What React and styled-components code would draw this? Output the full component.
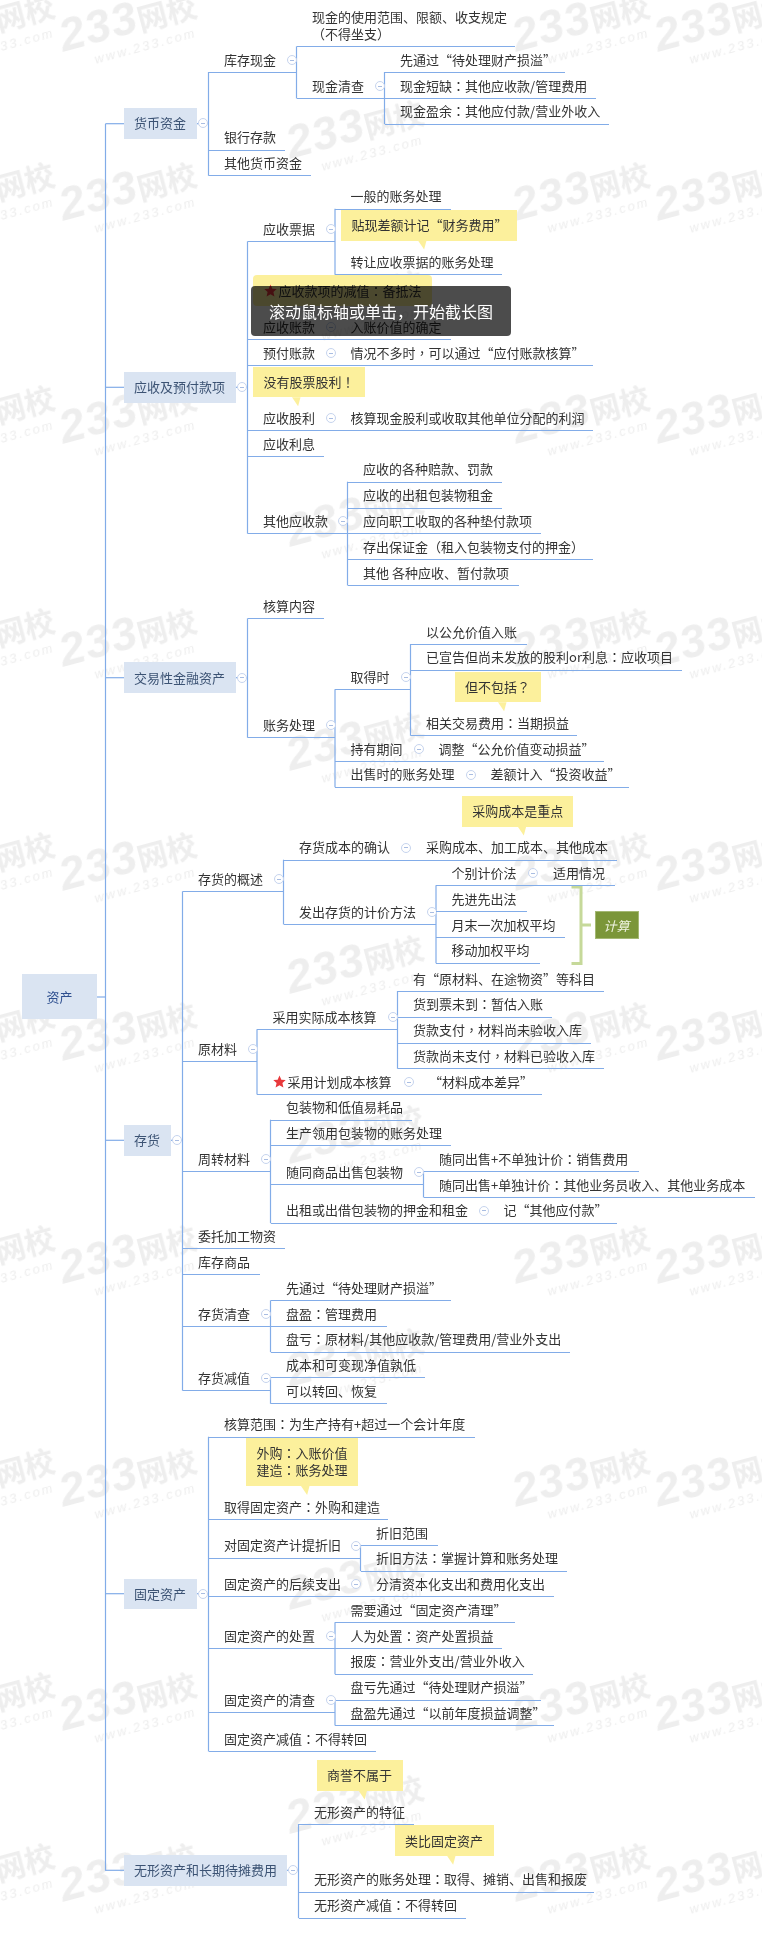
import React from 'react'
import styled, { createGlobalStyle } from 'styled-components'

const PAGE_H = 1935
const LINE = '#82ace8'

const GlobalStyle = createGlobalStyle`
  html, body { margin: 0; padding: 0; background: #fff; }
  body { font-family: "Noto Sans CJK SC", "Liberation Sans", sans-serif; color: #333; }
`

const Canvas = styled.div`
  position: relative;
  width: 762px;
  height: ${PAGE_H}px;
  overflow: hidden;
  background: #fff;
  font-size: 13px;
  filter: blur(0.35px);
`

const Mark = styled.div`
  position: absolute;
  left: ${p => p.$x - 6}px;
  top: ${p => p.$y + 28}px;
  width: 150px;
  color: #eeeeee;
  transform: rotate(-15deg);
  transform-origin: 0 0;
  white-space: nowrap;
  user-select: none;
  filter: blur(0.5px);
`
const MarkName = styled.div`
  font-family: "Liberation Sans", sans-serif;
  font-weight: 700;
  font-size: 46px;
  line-height: 42px;
  font-style: italic;
  letter-spacing: 1px;
  span { font-family: "Noto Sans CJK SC", sans-serif; font-style: normal; font-size: 30px; letter-spacing: 0; }
`
const MarkUrl = styled.div`
  font-family: "Liberation Sans", sans-serif;
  font-style: italic;
  font-size: 13px;
  line-height: 14px;
  letter-spacing: 2.2px;
  padding-left: 28px;
  margin-top: 1px;
`

const Lines = styled.svg`
  position: absolute;
  left: 0;
  top: 0;
`

const Topic = styled.div`
  position: absolute;
  left: ${p => p.$x}px;
  bottom: ${p => PAGE_H - p.$y - 1}px;
  width: ${p => p.$end - p.$x}px;
  box-sizing: border-box;
  padding: 0 0 4.5px 15.5px;
  line-height: 17px;
  white-space: pre;
  border-bottom: 1px solid ${LINE};
`

// the reference centres these marks in their box, as the TC cut does
const Punct = styled.span`
  font-family: "Noto Sans CJK TC", "Noto Sans CJK SC", sans-serif;
`

const Fold = styled.i`
  position: absolute;
  right: ${p => p.$out ? -10.5 : -0.5}px;
  bottom: ${p => p.$out ? 'calc(50% - 5px)' : '7px'};
  box-sizing: border-box;
  width: 10px;
  height: 10px;
  border: 1px solid #c6d4ee;
  border-radius: 50%;
  background: #fff;
  &::after {
    content: '';
    position: absolute;
    left: 2px;
    right: 2px;
    top: 3.5px;
    height: 1px;
    background: #a9bde2;
  }
`

const Branch = styled.div`
  position: absolute;
  left: 124px;
  top: ${p => p.$y}px;
  width: ${p => p.$w}px;
  height: 30.5px;
  box-sizing: border-box;
  padding: 0 0 1px 10px;
  display: flex;
  align-items: center;
  background: #dae4f2;
  color: #3c5374;
  white-space: nowrap;
`

const Root = styled.div`
  position: absolute;
  left: 22px;
  top: 974px;
  width: 75px;
  height: 45px;
  display: flex;
  align-items: center;
  justify-content: center;
  background: #dae4f2;
  color: #2f5090;
`

const Callout = styled.div`
  position: absolute;
  left: ${p => p.$x}px;
  top: ${p => p.$y}px;
  width: ${p => p.$w}px;
  height: ${p => p.$h || 30.5}px;
  box-sizing: border-box;
  padding: 0 0 1px 10.5px;
  display: flex;
  align-items: center;
  line-height: 17px;
  white-space: pre;
  background: #fcf09c;
  border-radius: ${p => p.$round ? 4 : 0}px;
  &::after {
    content: '';
    display: ${p => p.$tail ? 'block' : 'none'};
    position: absolute;
    left: ${p => p.$tail}px;
    top: 100%;
    width: 8.5px;
    height: 9px;
    background: #fcf09c;
    clip-path: polygon(0 0, 100% 0, 72% 100%);
  }
`

const Tag = styled.div`
  position: absolute;
  left: 594.5px;
  top: 911px;
  width: 44px;
  height: 28px;
  box-sizing: border-box;
  display: flex;
  align-items: center;
  justify-content: center;
  background: #7b9639;
  border: 1px solid #a4b873;
  color: #eef2df;
  font-style: italic;
`

const Toast = styled.div`
  position: absolute;
  left: 251px;
  top: 286px;
  width: 260px;
  height: 50px;
  display: flex;
  align-items: center;
  justify-content: center;
  border-radius: 4px;
  background: rgba(0, 0, 0, 0.7);
  color: #fff;
  font-size: 16px;
`

const StarIcon = styled.svg`
  width: 13px;
  height: 13px;
  flex: none;
  vertical-align: -1.5px;
  margin-right: 2px;
`

const Star = () => (
  <StarIcon viewBox="0 0 24 24"><path fill="#e8383b" d="M12 1l3.4 7.600 8.100.8-6.100 5.500 1.800 8.100L12 18.900 4.800 23l1.800-8.100L.5 9.400l8.100-.8z" /></StarIcon>
)

const Label = ({ text }) => text.split(/([：！？，])/).map((part, i) => (
  i % 2 ? <Punct key={i}>{part}</Punct> : part
))

// [x, line end, line y, text, has fold]
const topics = [
  // 货币资金
  [296.5, 515, 46.3, '现金的使用范围、限额、收支规定\n（不得坐支）'],
  [208.5, 296.5, 72, '库存现金', 1],
  [384.5, 565, 72, '先通过“待处理财产损溢”'],
  [296.5, 384.5, 98, '现金清查', 1],
  [384.5, 596, 98, '现金短缺：其他应收款/管理费用'],
  [384.5, 609, 123.7, '现金盈余：其他应付款/营业外收入'],
  [208.5, 285, 149.7, '银行存款'],
  [208.5, 311, 175.3, '其他货币资金'],
  // 应收及预付款项
  [335, 451, 208.7, '一般的账务处理'],
  [335, 502, 274.3, '转让应收票据的账务处理'],
  [247.5, 335, 241.3, '应收票据', 1],
  [247.5, 335, 339.3, '应收账款', 1],
  [335, 451, 339.3, '入账价值的确定'],
  [247.5, 335, 365, '预付账款', 1],
  [335, 593, 365, '情况不多时，可以通过“应付账款核算”'],
  [247.5, 335, 430.3, '应收股利', 1],
  [335, 593, 430.3, '核算现金股利或收取其他单位分配的利润'],
  [247.5, 323.5, 456.3, '应收利息'],
  [247.5, 347.5, 533.3, '其他应收款', 1],
  [347.5, 502, 481.7, '应收的各种赔款、罚款'],
  [347.5, 502, 507.7, '应收的出租包装物租金'],
  [347.5, 541, 533.3, '应向职工收取的各种垫付款项'],
  [347.5, 593, 559.3, '存出保证金（租入包装物支付的押金）'],
  [347.5, 518.5, 585, '其他 各种应收、暂付款项'],
  // 交易性金融资产
  [247.5, 323.5, 618.3, '核算内容'],
  [247.5, 335, 737.3, '账务处理', 1],
  [335, 410.5, 689.3, '取得时', 1],
  [410.5, 527, 644, '以公允价值入账'],
  [410.5, 682, 669.7, '已宣告但尚未发放的股利or利息：应收项目'],
  [410.5, 577, 735.3, '相关交易费用：当期损益'],
  [335, 423, 761, '持有期间', 1],
  [423, 603.5, 761, '调整“公允价值变动损益”'],
  [335, 475, 786.7, '出售时的账务处理', 1],
  [475, 629, 786.7, '差额计入“投资收益”'],
  // 存货
  [283.5, 410.5, 859.7, '存货成本的确认', 1],
  [410.5, 617, 859.7, '采购成本、加工成本、其他成本'],
  [182.5, 283.5, 891.3, '存货的概述', 1],
  [283.5, 436, 924, '发出存货的计价方法', 1],
  [436, 537.5, 885.3, '个别计价法', 1],
  [537.5, 615, 885.3, '适用情况'],
  [436, 526.5, 911.3, '先进先出法'],
  [436, 565, 937, '月末一次加权平均'],
  [436, 539.5, 962.7, '移动加权平均'],
  [397.5, 603.5, 991, '有“原材料、在途物资”等科目'],
  [397.5, 552, 1016.7, '货到票未到：暂估入账'],
  [257, 397.5, 1029.3, '采用实际成本核算', 1],
  [397.5, 590.5, 1042.7, '货款支付，材料尚未验收入库'],
  [397.5, 603.5, 1068.3, '货款尚未支付，材料已验收入库'],
  [182.5, 257, 1061.3, '原材料', 1],
  [413.5, 542, 1094, '“材料成本差异”'],
  [270.5, 412, 1119.7, '包装物和低值易耗品'],
  [270.5, 451, 1145.3, '生产领用包装物的账务处理'],
  [182.5, 270.5, 1171.3, '周转材料', 1],
  [270.5, 423.5, 1184.3, '随同商品出售包装物', 1],
  [423.5, 639, 1171.3, '随同出售+不单独计价：销售费用'],
  [423.5, 755, 1197, '随同出售+单独计价：其他业务员收入、其他业务成本'],
  [270.5, 488, 1222.7, '出租或出借包装物的押金和租金', 1],
  [488, 617, 1222.7, '记“其他应付款”'],
  [182.5, 285, 1248.3, '委托加工物资'],
  [182.5, 259.5, 1274.3, '库存商品'],
  [270.5, 451, 1300.3, '先通过“待处理财产损溢”'],
  [270.5, 386.5, 1326, '盘盈：管理费用'],
  [182.5, 270.5, 1326, '存货清查', 1],
  [270.5, 569.5, 1351.7, '盘亏：原材料/其他应收款/管理费用/营业外支出'],
  [270.5, 425, 1377.3, '成本和可变现净值孰低'],
  [182.5, 270.5, 1390.3, '存货减值', 1],
  [270.5, 386.5, 1403.3, '可以转回、恢复'],
  // 固定资产
  [208.5, 475, 1436.7, '核算范围：为生产持有+超过一个会计年度'],
  [208.5, 388, 1519, '取得固定资产：外购和建造'],
  [208.5, 360.5, 1557.7, '对固定资产计提折旧', 1],
  [360.5, 438, 1545, '折旧范围'],
  [360.5, 567, 1570.7, '折旧方法：掌握计算和账务处理'],
  [208.5, 360.5, 1596.3, '固定资产的后续支出', 1],
  [360.5, 554, 1596.3, '分清资本化支出和费用化支出'],
  [335, 515, 1622.3, '需要通过“固定资产清理”'],
  [208.5, 335, 1648, '固定资产的处置', 1],
  [335, 502, 1648, '人为处置：资产处置损益'],
  [335, 533, 1673.7, '报废：营业外支出/营业外收入'],
  [335, 541, 1699.7, '盘亏先通过“待处理财产损溢”'],
  [335, 554, 1725, '盘盈先通过“以前年度损益调整”'],
  [208.5, 335, 1712.3, '固定资产的清查', 1],
  [208.5, 375.5, 1751, '固定资产减值：不得转回'],
  // 无形资产和长期待摊费用
  [298.5, 413.5, 1824, '无形资产的特征'],
  [298.5, 594, 1891.7, '无形资产的账务处理：取得、摊销、出售和报废'],
  [298.5, 465.5, 1917.7, '无形资产减值：不得转回'],
]

const branches = [
  { text: '货币资金', y: 108, w: 73 },
  { text: '应收及预付款项', y: 372, w: 112 },
  { text: '交易性金融资产', y: 662.3, w: 112 },
  { text: '存货', y: 1125, w: 47 },
  { text: '固定资产', y: 1578.5, w: 73 },
  { text: '无形资产和长期待摊费用', y: 1855, w: 163 },
]

const callouts = [
  { text: '贴现差额计记“财务费用”', x: 341, y: 210, w: 176, tail: 77 },
  { text: '应收款项的减值：备抵法', x: 253, y: 275.3, w: 178.5, star: true, round: true },
  { text: '没有股票股利！', x: 253, y: 366.7, w: 111.5, tail: 39 },
  { text: '但不包括？', x: 454.5, y: 671.7, w: 86, tail: 43.5 },
  { text: '采购成本是重点', x: 461.7, y: 796, w: 111.3, tail: 56 },
  { text: '外购：入账价值\n建造：账务处理', x: 246, y: 1437.7, w: 112, h: 48.3, tail: 55 },
  { text: '商誉不属于', x: 316.5, y: 1760, w: 86, tail: 42 },
  { text: '类比固定资产', x: 394.5, y: 1825.3, w: 99, tail: 52.5 },
]

// [x, y1, y2] vertical connectors
const verticals = [
  [105.5, 123.7, 1870.3],
  [208.5, 72, 175.3], [296.5, 46.3, 98], [384.5, 72, 123.7],
  [247.5, 241.3, 533.3], [335, 208.7, 274.3], [347.5, 481.7, 585],
  [247.5, 618.3, 737.3], [335, 689.3, 786.7], [410.5, 644, 735.3],
  [182.5, 891.3, 1390.3], [283.5, 859.7, 924], [436, 885.3, 962.7],
  [257, 1029.3, 1094], [397.5, 991, 1068.3],
  [270.5, 1119.7, 1222.7], [423.5, 1171.3, 1197],
  [270.5, 1300.3, 1351.7], [270.5, 1377.3, 1403.3],
  [208.5, 1436.7, 1751], [360.5, 1545, 1570.7], [335, 1622.3, 1673.7], [335, 1699.7, 1725],
  [298.5, 1824, 1917.7],
]

// [x1, x2, y] stubs from the trunk to a branch, and from a branch to its children
const stubs = [
  [96.7, 105.5, 997],
  [105.5, 124, 123.7], [197, 208.5, 123.7],
  [105.5, 124, 387.3], [235.7, 247.5, 387.3],
  [105.5, 124, 677.7], [235.7, 247.5, 677.7],
  [105.5, 124, 1140.3], [171, 182.5, 1140.3],
  [105.5, 124, 1593.7], [197, 208.5, 1593.7],
  [105.5, 124, 1870.3], [287, 298.5, 1870.3],
]

const rowA = [-12, 157, 380, 603, 827, 997, 1220, 1443, 1667, 1838]
const rowB = [95, 265, 483, 707, 930, 1100, 1323, 1546, 1770]

const Watermark = ({ x, y }) => (
  <Mark $x={x} $y={y}>
    <MarkName>233<span>网校</span></MarkName>
    <MarkUrl>www.233.com</MarkUrl>
  </Mark>
)

const App = () => (
  <Canvas>
    <GlobalStyle />
    {rowA.flatMap(y => [-82, 60, 513, 655].map(x => <Watermark key={`${x}-${y}`} x={x} y={y} />))}
    {rowB.map(y => <Watermark key={y} x={287} y={y} />)}

    <Lines width="762" height={PAGE_H} fill="none">
      <g stroke={LINE} strokeWidth="1.2">
        {verticals.map(([x, a, b]) => <path key={`${x}-${a}`} d={`M${x} ${a}V${b + 0.5}`} />)}
        {stubs.map(([a, b, y]) => <path key={`${a}-${y}`} d={`M${a} ${y}H${b}`} />)}
      </g>
      <path d="M571.5 887H581V963.500H571.5M581 925H591" stroke="#c6d99a" strokeWidth="3" />
    </Lines>

    <Root>资产</Root>
    {branches.map(b => (
      <Branch key={b.text} $y={b.y} $w={b.w}>
        {b.text}
        <Fold $out />
      </Branch>
    ))}

    {topics.map(([x, end, y, text, fold]) => (
      <Topic key={`${text}-${y}`} $x={x} $end={end} $y={y}>
        <Label text={text} />
        {fold ? <Fold /> : null}
      </Topic>
    ))}

    {/* the starred topic has a glyph before its text */}
    <Topic $x={257} $end={413.5} $y={1094}>
      <Star />采用计划成本核算
      <Fold />
    </Topic>

    {callouts.map(c => (
      <Callout key={c.text} $x={c.x} $y={c.y} $w={c.w} $h={c.h} $tail={c.tail} $round={c.round}>
        {c.star ? <Star /> : null}
        <span><Label text={c.text} /></span>
      </Callout>
    ))}

    <Tag>计算</Tag>
    <Toast>滚动鼠标轴或单击，开始截长图</Toast>
  </Canvas>
)

export default App
